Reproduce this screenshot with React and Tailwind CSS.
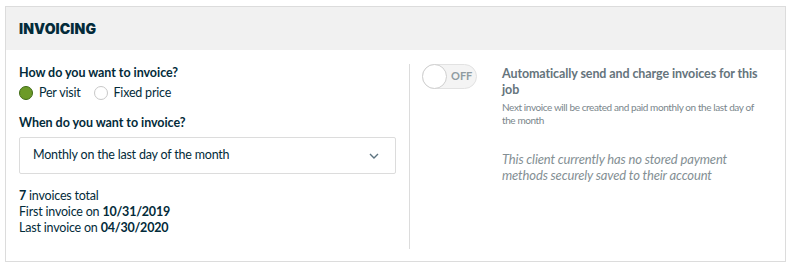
import React from "react";

const Radio = ({ checked, label }) => (
  <label className="flex items-center gap-[6px]">
    {checked ? (
      <span className="w-[14px] h-[14px] rounded-full bg-[#6c9a28] border border-[#3f6a14]" />
    ) : (
      <span className="w-[14px] h-[14px] rounded-full bg-white border border-[#c8c8c8]" />
    )}
    <span>{label}</span>
  </label>
);

const App = () => {
  const [perVisit, setPerVisit] = React.useState(true);

  return (
    <div
      className="w-[793px] h-[268px] bg-white pt-[6px] pl-[5px] text-[#032b3a]"
      style={{ fontFamily: "Lato, 'Open Sans', sans-serif" }}
    >
      <div className="w-[781px] border border-[#dcdcdc]">
        <div className="h-[43px] bg-[#f1f1f1] flex items-center px-[13px]">
          <h2 className="text-[14px] font-black tracking-[0.1px]" style={{ fontFamily: "Inter, sans-serif" }}>
            INVOICING
          </h2>
        </div>

        <div className="flex px-[13px] pt-[14px] pb-[12px]">
          <div className="w-[377px] text-[12.5px] tracking-[-0.2px]">
            <div className="font-bold leading-[18px] tracking-[-0.05px]">How do you want to invoice?</div>
            <div className="flex items-center gap-[13px] mt-[2px] leading-[18px]" onClick={() => setPerVisit(!perVisit)}>
              <Radio checked={perVisit} label="Per visit" />
              <Radio checked={!perVisit} label="Fixed price" />
            </div>
            <div className="font-bold leading-[18px] mt-[12px] tracking-[-0.05px]">When do you want to invoice?</div>
            <div className="mt-[5px] h-[37px] border border-[#dcdcdc] rounded-[2px] flex items-center justify-between pl-[13px] pr-[16px]">
              <span>Monthly on the last day of the month</span>
              <svg width="10" height="6" viewBox="0 0 10 6" fill="none">
                <path d="M1 1l4 4 4-4" stroke="#5d7480" strokeWidth="1.4" />
              </svg>
            </div>
            <div className="mt-[14px] leading-[16px]">
              <div><b>7</b> invoices total</div>
              <div>First invoice on <b>10/31/2019</b></div>
              <div>Last invoice on <b>04/30/2020</b></div>
            </div>
          </div>

          <div className="ml-[13px] w-px h-[185px] bg-[#dcdcdc]" />

          <div className="flex flex-1 pl-[12px] gap-[25px] text-[#65747c]">
            <div className="w-[55px] h-[25px] shrink-0 rounded-full bg-[#f4f4f4] border border-[#e2e2e2] flex items-center">
              <span className="w-[25px] h-[25px] -ml-px rounded-full bg-white border border-[#cfcfcf]" />
              <span className="ml-[4px] text-[11px] font-bold text-[#8f9ca2]">OFF</span>
            </div>
            <div className="pr-[6px]">
              <div className="text-[12.5px] font-bold leading-[16px] mt-[2px] tracking-[-0.1px]">
                Automatically send and charge invoices for this job
              </div>
              <div className="text-[10px] leading-[13px] mt-[3px] text-[#7a868b] tracking-[-0.4px]">
                Next invoice will be created and paid monthly on the last day of the month
              </div>
              <div className="text-[13px] italic leading-[16px] mt-[24px] text-[#848f94] tracking-[-0.15px]">
                This client currently has no stored payment methods securely saved to their account
              </div>
            </div>
          </div>
        </div>
      </div>
    </div>
  );
};

export default App;
